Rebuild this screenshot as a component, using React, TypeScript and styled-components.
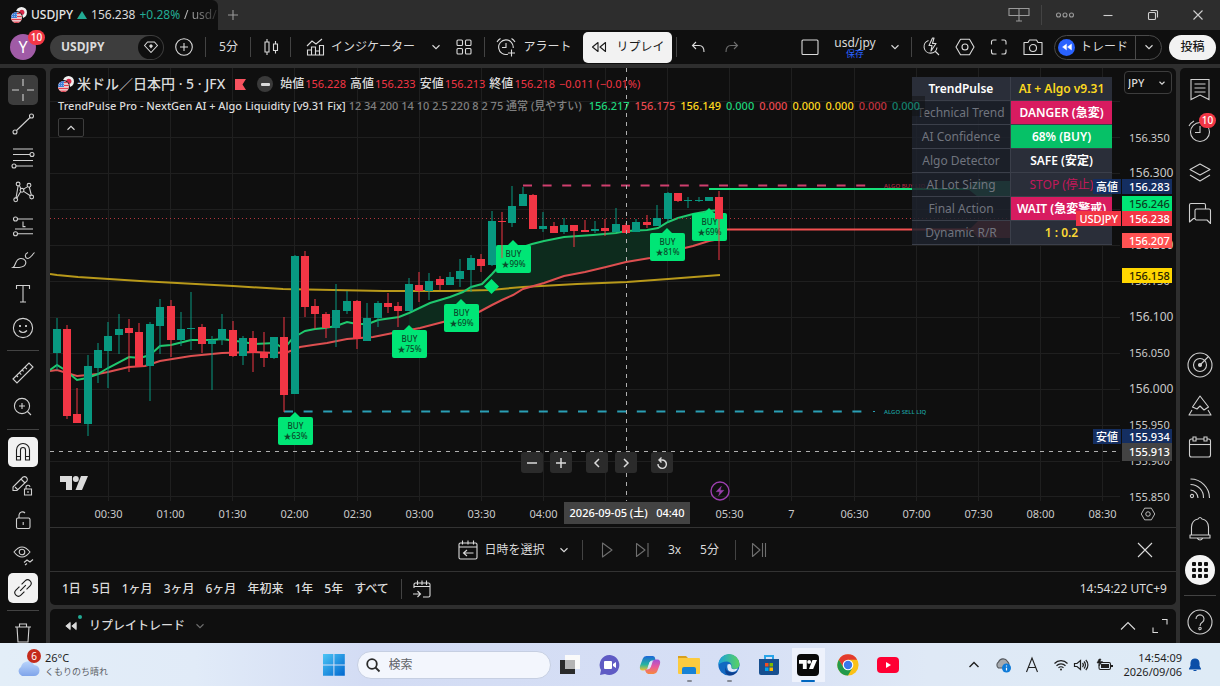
import React from "react";
import styled, { createGlobalStyle } from "styled-components";

const GlobalStyle = createGlobalStyle`
  *, *::before, *::after { box-sizing: border-box; }
  body {
    margin: 0;
    background: #2e2e2e;
    color: #dbdbdb;
    font-family: "Noto Sans", "Noto Sans CJK JP", sans-serif;
    font-size: 12px;
    line-height: 16px;
  }
  button, input, select { font: inherit; color: inherit; }
  button { background: none; border: 0; padding: 0; cursor: pointer; }
  svg { display: block; flex: none; }
`;

const UP = "#089981";
const DOWN = "#f23645";
const PANEL = "#0f0f0f";

/* ---------- icons: drawn round the origin, one unit to the pixel ---------- */

type IconProps = { size?: number; color?: string; width?: number; children: React.ReactNode };

const Icon = ({ size = 28, color = "currentColor", width = 1.1, children }: IconProps) => (
  <svg
    width={size}
    height={size}
    viewBox={`${-size / 2} ${-size / 2} ${size} ${size}`}
    fill="none"
    stroke={color}
    strokeWidth={width}
    aria-hidden="true"
  >
    {children}
  </svg>
);

const Chevron = ({ up = false, w = 3.5 }: { up?: boolean; w?: number }) => (
  <Icon size={18}>
    <path d={up ? `M${-w} ${w / 2}L0 ${-w / 2}L${w} ${w / 2}` : `M${-w} ${-w / 2}L0 ${w / 2}L${w} ${-w / 2}`} />
  </Icon>
);

const FlagPair = () => (
  <svg width="16" height="16" viewBox="0 0 16 16" aria-hidden="true">
    <circle cx="10.5" cy="5.5" r="5.5" fill="#f0f0f0" />
    <circle cx="10.8" cy="5.3" r="2.6" fill="#d6294a" />
    <circle cx="5.5" cy="10.5" r="6.4" fill={PANEL} />
    <clipPath id="us"><circle cx="5.5" cy="10.5" r="5.5" /></clipPath>
    <g clipPath="url(#us)">
      <rect y="5" width="11" height="11" fill="#f0f0f0" />
      <path d="M0 6.5H11M0 9.5H11M0 12.5H11M0 15.3H11" stroke="#e0404f" strokeWidth="1.4" />
      <rect y="5" width="6" height="6" fill="#3f7fd6" />
      <path d="M1 7.5H6M1 9.5H6" stroke="#cfe0f5" strokeWidth=".6" strokeDasharray="1 1" />
    </g>
  </svg>
);

const TvMark = ({ w, color }: { w: number; color: string }) => (
  <svg width={w} height={w / 2} viewBox="0 0 28 14" fill={color} aria-hidden="true">
    <path d="M0 0H12V14H6V6H0Z" />
    <circle cx="15.8" cy="3" r="3" />
    <path d="M21 0H28L22 14H15.5Z" />
  </svg>
);

const Rewind = ({ fill = "none", size = 18, s = 1 }: { fill?: string; size?: number; s?: number }) => (
  <Icon size={size}>
    <path d="M-1 -4.5V4.5L-6.5 0ZM6.5 -4.5V4.5L1 0Z" transform={`scale(${s})`} fill={fill} strokeLinejoin="round" />
  </Icon>
);

const HexNut = ({ s = 1, size = 28 }: { s?: number; size?: number }) => (
  <Icon size={size}>
    <g transform={`scale(${s})`}>
      <path d="M-4.5 -7.8H4.5L9 0L4.5 7.8H-4.5L-9 0Z" strokeLinejoin="round" />
      <circle r="3" />
    </g>
  </Icon>
);

const Alarm = ({ plus = false }: { plus?: boolean }) =>
  plus ? (
    <Icon size={22}>
      <path d="M2 7.2A7.3 7.3 0 1 1 7.2 1M0 -4V0.5H-4M-9 -5A9 9 0 0 1 -5.5 -8.5M5.5 -8.5A9 9 0 0 1 9 -5M5.5 2.5V9.5M2 6H9" />
    </Icon>
  ) : (
    <Icon>
      <circle cx="0" cy="1" r="9.5" />
      <path d="M0 -5V1.5H-5M-11 -5A13 13 0 0 1 -6 -10" />
    </Icon>
  );

const drawingTools: { name: string; active?: "dim" | "lit"; icon: React.ReactNode; rule?: boolean }[] = [
  { name: "十字線", active: "dim", icon: <path d="M0 -11V-4M0 4V11M-11 0H-4M4 0H11" /> },
  { name: "トレンドライン", icon: <><circle cx="8.5" cy="-8" r="2" /><circle cx="-8" cy="8" r="2" /><path d="M7 -6.5L-6.5 6.5" /></> },
  { name: "フィボナッチ", icon: <><path d="M-10 -9H10M-10 -3.5H7M-10 2.5H10M-7 8H10" /><circle cx="9" cy="-3.5" r="2" /><circle cx="-9" cy="8" r="2" /></> },
  { name: "パターン", icon: <><path d="M-4.9 -6L-7 6M-3.6 -6.6L-2 -3M4.7 -5.4L.5 -2.9M6.3 -4.8L8.3 3M.7 -.6L7.3 3.8M-2.4 -.3L-6.2 6.2" /><circle cx="-4.9" cy="-8" r="1.9" /><circle cx="6" cy="-6.7" r="1.9" /><circle cx="-1" cy="-1.7" r="1.9" /><circle cx="8.7" cy="5" r="1.9" /><circle cx="-7.3" cy="7.8" r="1.9" /></> },
  { name: "予測", icon: <><path d="M-5.5 -7H10M0 -4.5V.6H2.5M-8 3H10M-5.5 7.8H10" /><circle cx="-7.5" cy="-7" r="2" /><circle cx="-7.5" cy="7.8" r="2" /></> },
  { name: "ブラシ", icon: <path d="M-10 7.5C-7 6 -8 -1 -2.5 -1.5C2 -1.8 4 2 2 5C.2 7.8 -4 7.8 -10 7.5ZM5 -7.5C1 -6 2 -1.5 5 -1.5C7 -1.5 7.5 -3 11.5 -7.5" /> },
  { name: "テキスト", icon: <path d="M-6.5 -5V-8.5H6.5V-5M0 -8.5V8M-3 8H3" /> },
  { name: "アイコン", rule: true, icon: <><circle r="9.6" /><path d="M-4 2.5Q0 6.5 4 2.5" /><path d="M-3 -3V-1M3 -3V-1" strokeWidth="1.8" /></> },
  { name: "計測", icon: <path d="M-10 6L6 -10L10 -6L-6 10ZM-6.5 2.5L-5 4M-3.7 -.3L-1.7 1.7M-.9 -3.1L.6 -1.6M1.9 -5.9L3.9 -3.9" /> },
  { name: "ズームイン", rule: true, icon: <><circle cx="-1" cy="-1" r="7.6" /><path d="M4.5 4.5L8 8M-1 -4V2M-4 -1H2" /></> },
  { name: "マグネット", active: "lit", icon: <path d="M-6.5 8V-2A6.5 6.5 0 0 1 6.5 -2V8H2.5V-2A2.5 2.5 0 0 0 -2.5 -2V8ZM-6.5 4.5H-2.5M2.5 4.5H6.5" /> },
  { name: "描画モード維持", icon: <><path d="M-10 4V1L0 -9Q2 -10 3.5 -8.5Q5 -7 4 -5L-6 4.5L-10 4.5ZM-2 -7L2 -3M-8 1L-5.5 3.5" /><path d="M1.5 3H8.5V9H1.5ZM3 3V1.5A2 2 0 0 1 7 1M5 5V7" /></> },
  { name: "描画をロック", icon: <><rect x="-6.5" y="-2" width="13.5" height="10.5" rx="1.5" /><path d="M-4 -2V-5A3.5 3.5 0 0 1 2 -7M.2 2V5" /></> },
  { name: "描画を隠す", icon: <><path d="M-9 -2Q-1 -12 7 -2Q-1 8 -9 -2Z" /><circle cx="-1" cy="-2" r="2.8" /><path d="M1 8.5L4 6L7 8L10 5.5M2 11L4 9.500" /></> },
  { name: "リンク", active: "lit", rule: true, icon: <g transform="rotate(-45)"><path d="M-1.5 3.5H-6.5A3.5 3.5 0 0 1 -6.5 -3.5H-1.5M1.5 -3.5H6.5A3.5 3.5 0 0 1 6.5 3.5H1.5M-4 0H4" /></g> },
  { name: "削除", icon: <path d="M-8 -6H8M-6 -6L-5 9H5L6 -6M-3.5 -6V-9H3.5V-6" /> },
];

/* ---------- window frame ---------- */

const Page = styled.div`
  display: flex;
  flex-direction: column;
  height: 100vh;
  overflow: hidden;
`;

const TabStrip = styled.div`
  display: flex;
  flex: none;
  align-items: center;
  height: 30px;
  background: #2d2d2d;
`;

const Tab = styled.div`
  display: flex;
  align-items: center;
  gap: 4px;
  width: 218px;
  height: 100%;
  padding: 0 10px 0 11px;
  border-radius: 0 6px 0 0;
  background: ${PANEL};
  white-space: nowrap;
  overflow: hidden;
  font-size: 12px;
`;

const TabTitle = styled.span`
  font-weight: 500;
  color: #e6e6e6;
`;

const Change = styled.span`
  color: #22ab94;
`;

const Fade = styled.span`
  color: transparent;
  background: linear-gradient(90deg, #ccc, #333 32px);
  background-clip: text;
`;

const Spacer = styled.div`
  flex: 1;
`;

const WindowButton = styled.button<{ $w: number; $dim?: boolean }>`
  display: flex;
  justify-content: center;
  align-items: center;
  width: ${(p) => p.$w}px;
  height: 30px;
  color: ${(p) => (p.$dim ? "#9a9a9a" : "#cfcfcf")};
`;

const Header = styled.header`
  display: flex;
  flex: none;
  align-items: center;
  height: 34px;
  padding: 0 4px 0 10px;
  background: ${PANEL};
`;

const Slot = styled.button<{ $w: number; $dim?: boolean }>`
  display: flex;
  flex: none;
  justify-content: center;
  align-items: center;
  gap: 6px;
  width: ${(p) => p.$w}px;
  height: 30px;
  color: ${(p) => (p.$dim ? "#6e6e6e" : "#dbdbdb")};
  white-space: nowrap;
`;

const Sep = styled.div<{ $m?: number; $ml?: number }>`
  flex: none;
  width: 1px;
  height: 20px;
  margin: 0 ${(p) => p.$m ?? 2}px 0 ${(p) => p.$ml ?? 1}px;
  background: #434343;
`;

const Avatar = styled.button`
  position: relative;
  width: 26px;
  height: 26px;
  margin-right: 14px;
  border-radius: 50%;
  background: #a05ba6;
  color: #fff;
  font-size: 16px;
`;

const Badge = styled.span`
  position: absolute;
  top: -4px;
  right: -9px;
  min-width: 17px;
  padding: 0 2px;
  border-radius: 8px;
  background: ${DOWN};
  color: #fff;
  font-size: 10px;
  font-weight: 500;
  line-height: 15px;
  text-align: center;
`;

const SymbolPill = styled.button`
  display: flex;
  justify-content: space-between;
  align-items: center;
  width: 114px;
  height: 25px;
  padding: 0 1px 0 11px;
  border-radius: 13px;
  background: #3d3d3d;
  font-size: 12px;
  font-weight: 700;
`;

const PillEye = styled.span`
  display: flex;
  justify-content: center;
  align-items: center;
  width: 25px;
  height: 23px;
  border-radius: 12px;
  background: ${PANEL};
`;

const ReplayButton = styled.button`
  display: flex;
  justify-content: center;
  align-items: center;
  gap: 8px;
  width: 89px;
  height: 31px;
  margin: 0 3px;
  border-radius: 5px;
  background: #f2f2f2;
  color: #1a1a1a;
`;

const LayoutName = styled.span`
  display: block;
  font-size: 12px;
  line-height: 12px;
  small {
    display: block;
    color: #2962ff;
    font-size: 9px;
    line-height: 9px;
  }
`;

const TradePill = styled.div`
  display: flex;
  align-items: center;
  width: 108px;
  height: 25px;
  margin: 0 7px 0 4px;
  border: 1px solid #4a4a4a;
  border-radius: 13px;
`;

const TradeMain = styled.button`
  display: flex;
  flex: 1;
  align-items: center;
  gap: 5px;
  height: 23px;
  padding-left: 3px;
  border-right: 1px solid #4a4a4a;
`;

const BlueDot = styled.span`
  display: flex;
  justify-content: center;
  align-items: center;
  width: 17px;
  height: 17px;
  border-radius: 50%;
  background: #2962ff;
  color: #fff;
`;

const TradeMore = styled.button`
  display: flex;
  justify-content: center;
  width: 25px;
`;

const Publish = styled.button`
  width: 47px;
  height: 25px;
  border-radius: 13px;
  background: #f2f2f2;
  color: #1a1a1a;
  font-size: 12px;
  font-weight: 500;
`;

/* ---------- body ---------- */

const Body = styled.div`
  display: grid;
  flex: 1;
  grid-template-columns: 46px minmax(0, 1fr) 40px;
  gap: 4px;
  min-height: 0;
  padding-top: 4px;
`;

const Rail = styled.nav<{ $right?: boolean }>`
  display: flex;
  flex-direction: column;
  align-items: center;
  padding: ${(p) => (p.$right ? "1px 0 1px" : "5px 0 0")};
  border-radius: ${(p) => (p.$right ? "5px 0 0 0" : "0 5px 0 0")};
  background: ${PANEL};
  overflow: hidden;
`;

const Tool = styled.button<{ $state?: "dim" | "lit" }>`
  display: flex;
  flex: none;
  justify-content: center;
  align-items: center;
  width: 30px;
  height: 30px;
  margin: 2px 0;
  border-radius: 5px;
  background: ${(p) => (p.$state === "lit" ? "#f2f2f2" : p.$state === "dim" ? "#3d3d3d" : "none")};
  color: ${(p) => (p.$state === "lit" ? "#1a1a1a" : "#d1d1d1")};
`;

const Rule = styled.hr`
  flex: none;
  width: 32px;
  height: 1px;
  margin: 5px 0;
  border: 0;
  background: #434343;
`;

const SideButton = styled.button`
  position: relative;
  display: flex;
  flex: none;
  justify-content: center;
  align-items: center;
  width: 40px;
  height: 41px;
  color: #cfcfcf;
`;

const SideBadge = styled(Badge)`
  top: 3px;
  right: 4px;
`;

const AppsDot = styled.span`
  display: flex;
  justify-content: center;
  align-items: center;
  width: 30px;
  height: 30px;
  border-radius: 50%;
  background: #f5f5f5;
  color: #111;
`;

const Center = styled.main`
  display: flex;
  flex-direction: column;
  min-width: 0;
  min-height: 0;
`;

const ChartPanel = styled.section`
  display: flex;
  flex: 1;
  flex-direction: column;
  min-height: 0;
  border-radius: 5px;
  background: ${PANEL};
`;

const ChartGrid = styled.div`
  display: grid;
  flex: 1;
  grid-template: minmax(0, 1fr) 26px / minmax(0, 1fr) 56px;
  min-height: 0;
`;

const Plot = styled.div`
  position: relative;
  overflow: hidden;
`;

const Layer = styled.svg`
  position: absolute;
  inset: 0;
  width: 100%;
  height: 100%;
`;

const Signal = styled.div`
  position: absolute;
  width: 35px;
  margin-left: -17px;
  padding: 4px 0;
  border-radius: 2px;
  background: #00e676;
  color: #0b4a2b;
  font-size: 8px;
  font-weight: 500;
  line-height: 10px;
  text-align: center;
  &::before {
    content: "";
    position: absolute;
    top: -5px;
    left: 12px;
    border: 5px solid transparent;
    border-top: 0;
    border-bottom-color: #00e676;
  }
  span { display: block; }
`;

const ZoneName = styled.span<{ $c: string }>`
  position: absolute;
  margin-top: -5px;
  color: ${(p) => p.$c};
  font-size: 6px;
  font-weight: 500;
  line-height: 10px;
  white-space: nowrap;
`;

const Legend = styled.div`
  position: absolute;
  z-index: 2;
  top: 6px;
  left: 8px;
  white-space: nowrap;
`;

const LegendRow = styled.div`
  display: flex;
  align-items: center;
  height: 20px;
  font-size: 11px;
  font-weight: 500;
`;

const PairName = styled.span`
  margin: 0 10px 0 3px;
  font-size: 14px;
`;

const Disc = styled.span`
  display: flex;
  justify-content: center;
  align-items: center;
  width: 16px;
  height: 16px;
  margin: 0 7px 0 11px;
  border-radius: 50%;
  background: #3a3a3a;
`;

const Ohlc = styled.span`
  margin-right: 4px;
  color: ${DOWN};
  font-weight: 400;
  b {
    margin-right: 1px;
    color: #dbdbdb;
    font-size: 12px;
    font-weight: 500;
  }
`;

const StudyRow = styled(LegendRow)`
  height: 24px;
`;

const StudyArgs = styled.span`
  margin: 0 7px 0 3px;
  color: #808080;
`;

const StudyValue = styled.span<{ $c: string }>`
  padding-right: 5px;
  color: ${(p) => p.$c};
  line-height: 20px;
  &:last-child { background: rgba(15, 15, 15, 0.45); }
`;

const Collapse = styled.button`
  display: flex;
  justify-content: center;
  align-items: center;
  width: 26px;
  height: 19px;
  border: 1px solid #3d3d3d;
  border-radius: 2px;
`;

const Dashboard = styled.table`
  position: absolute;
  top: 9px;
  right: 8px;
  width: 200px;
  border-spacing: 0;
  table-layout: fixed;
  th, td {
    height: 24px;
    padding: 0;
    border-bottom: 1px solid #3b3f4a;
    font-size: 12px;
    line-height: 16px;
    text-align: center;
    white-space: nowrap;
    overflow: hidden;
  }
  th {
    width: 99px;
    border-right: 1px solid #3b3f4a;
    background: rgba(30, 34, 45, 0.84);
    color: #70747e;
    font-weight: 400;
  }
`;

const Cell = styled.td<{ $bg: string; $c: string; $regular?: boolean }>`
  background: ${(p) => p.$bg};
  color: ${(p) => p.$c};
  font-weight: ${(p) => (p.$regular ? 400 : 600)};
`;

const HeadCell = styled.th`
  && {
    background: #2a2e39;
    color: #fff;
    font-weight: 600;
  }
`;

const MapControls = styled.div`
  position: absolute;
  right: 0;
  bottom: 28px;
  left: 23px;
  display: flex;
  justify-content: center;
  gap: 7px;
`;

const MapButton = styled.button<{ $lead?: boolean }>`
  display: flex;
  justify-content: center;
  align-items: center;
  width: 22px;
  height: 21px;
  margin-left: ${(p) => (p.$lead ? 7 : 0)}px;
  border-radius: 3px;
  background: #2b2b2b;
`;

const Watermark = styled.div`
  position: absolute;
  bottom: 11px;
  left: 10px;
`;

const Flash = styled.div`
  position: absolute;
  bottom: 0;
  margin-left: -10px;
`;

const PriceAxis = styled.div`
  position: relative;
`;

const Currency = styled.label`
  position: absolute;
  z-index: 1;
  top: 3px;
  left: 4px;
  display: flex;
  align-items: center;
  width: 48px;
  height: 23px;
  border: 1px solid #3d3d3d;
  border-radius: 4px;
  background: ${PANEL};
  select {
    width: 31px;
    padding: 0 0 0 3px;
    border: 0;
    background: none;
    appearance: none;
    font-size: 11px;
    font-weight: 500;
  }
`;

const Price = styled.span<{ $strong?: boolean }>`
  position: absolute;
  left: 9px;
  margin-top: -8px;
  color: #c9c9c9;
  font-size: ${(p) => (p.$strong ? 12 : 11)}px;
  line-height: 16px;
`;

const Tag = styled.span<{ $bg: string; $c?: string; $tall?: boolean }>`
  position: absolute;
  left: 2px;
  width: 50px;
  margin-top: ${(p) => (p.$tall ? -9 : -8)}px;
  padding-left: 7px;
  background: ${(p) => p.$bg};
  color: ${(p) => p.$c ?? "#fff"};
  font-size: 11px;
  font-weight: 500;
  line-height: ${(p) => (p.$tall ? 18 : 15)}px;
`;

const TagName = styled.span<{ $bg: string }>`
  position: absolute;
  top: 0;
  right: 100%;
  margin-right: 1px;
  padding: 0 3px;
  background: ${(p) => p.$bg};
  white-space: nowrap;
`;

const TimeAxis = styled.div`
  position: relative;
`;

const Time = styled.span`
  position: absolute;
  top: 5px;
  width: 40px;
  margin-left: -20px;
  color: #c9c9c9;
  font-size: 11px;
  text-align: center;
`;

const TimeTag = styled.span`
  position: absolute;
  top: 1px;
  width: 126px;
  margin-left: -63px;
  background: #434343;
  color: #fff;
  font-size: 11px;
  font-weight: 500;
  line-height: 22px;
  text-align: center;
  white-space: pre;
`;

const AxisSettings = styled.button`
  display: flex;
  justify-content: center;
  align-items: center;
`;

const ReplayBar = styled.div`
  display: grid;
  flex: none;
  grid-template-columns: 1fr auto 1fr;
  align-items: center;
  height: 44px;
  border-top: 1px solid #333;
`;

const ReplayTools = styled.div`
  display: flex;
  grid-column: 2;
  align-items: center;
`;

const Close = styled.button`
  justify-self: end;
  margin-right: 17px;
`;

const RangeBar = styled.div`
  display: flex;
  flex: none;
  align-items: center;
  height: 34px;
  padding: 0 9px 0 12px;
  border-top: 1px solid #333;
`;

const Range = styled.button`
  margin-right: 11px;
  font-size: 12px;
  font-weight: 500;
`;

const BottomPanel = styled.section`
  display: flex;
  flex: none;
  align-items: center;
  height: 34px;
  margin-top: 4px;
  padding: 0 0 0 12px;
  border-radius: 5px 5px 0 0;
  background: ${PANEL};
`;

const TradeTitle = styled.button`
  position: relative;
  display: flex;
  align-items: center;
  gap: 9px;
  font-size: 12px;
  font-weight: 500;
  &::after {
    content: "";
    position: absolute;
    top: -2px;
    left: 16px;
    width: 4px;
    height: 4px;
    border-radius: 50%;
    background: #22ab94;
  }
`;

/* ---------- task bar ---------- */

const TaskBar = styled.footer`
  display: grid;
  flex: none;
  grid-template-columns: 1fr auto 1fr;
  align-items: center;
  height: 43px;
  background: linear-gradient(90deg, #e3eef8 0%, #e1ebf8 16%, #d3dcf4 30%, #d6dff5 60%, #dfe9f6 76%, #deebf6 100%);
  color: #1f1f1f;
`;

const Weather = styled.button`
  position: relative;
  display: flex;
  align-items: center;
  gap: 5px;
  padding-left: 16px;
  font-size: 11px;
  line-height: 14px;
  text-align: left;
  small { display: block; color: #5b6066; font-size: 9px; }
`;

const WeatherBadge = styled.span`
  position: absolute;
  top: -2px;
  left: 27px;
  width: 14px;
  border-radius: 50%;
  background: #c42b1c;
  color: #fff;
  font-size: 10px;
  text-align: center;
`;

const TaskCenter = styled.div`
  display: flex;
  align-items: center;
  padding-left: 10px;
`;

const StartButton = styled.button`
  width: 22px;
  height: 22px;
`;

const SearchBox = styled.label`
  display: flex;
  align-items: center;
  gap: 8px;
  width: 194px;
  height: 28px;
  margin-left: 12px;
  padding-left: 7px;
  border: 1px solid #c6cfe2;
  border-radius: 14px;
  background: #f3f6fd;
  input {
    width: 140px;
    padding: 0;
    border: 0;
    outline: 0;
    background: none;
    font-size: 12px;
  }
  input::placeholder { color: #5f6368; opacity: 1; }
`;

const Apps = styled.div`
  display: flex;
  width: 357px;
`;

const AppButton = styled.button<{ $open?: boolean; $active?: boolean }>`
  position: relative;
  display: flex;
  flex: 1;
  justify-content: center;
  align-items: center;
  height: 34px;
  border-radius: 4px;
  background: ${(p) => (p.$active ? "linear-gradient(90deg, transparent 3px, #eef2fc 3px, #eef2fc 36px, transparent 36px)" : "none")};
  &::after {
    content: "";
    position: absolute;
    bottom: 0;
    width: ${(p) => (p.$active ? 14 : p.$open ? 5 : 0)}px;
    height: 2px;
    border-radius: 1px;
    background: ${(p) => (p.$active ? "#0067c0" : "#868b96")};
  }
`;

const TvTile = styled.span`
  display: flex;
  justify-content: center;
  align-items: center;
  width: 22px;
  height: 22px;
  border-radius: 4px;
  background: #0a0a0a;
`;

const Tray = styled.div`
  display: flex;
  justify-content: flex-end;
  align-items: center;
  padding-right: 12px;
`;

const TrayButton = styled.button<{ $w: number }>`
  display: flex;
  justify-content: center;
  width: ${(p) => p.$w}px;
`;

const Clock = styled.button`
  width: 60px;
  font-size: 11px;
  line-height: 14px;
  text-align: right;
`;

/* ---------- chart data ---------- */

const VIEW = { x: 50, y: 68, w: 1070, h: 433 };
const left = (x: number) => `${((x - VIEW.x) / VIEW.w) * 100}%`;
const top = (y: number) => `${((y - VIEW.y) / VIEW.h) * 100}%`;
const viewBox = `${VIEW.x} ${VIEW.y} ${VIEW.w} ${VIEW.h}`;

/* high, body top, body bottom, low, rising */
const candles: [number, number, number, number, 0 | 1][] = [
  [318, 329, 353, 370, 1], [325, 329, 416, 419, 0], [388, 414, 423, 423, 0], [355, 366, 424, 436, 1],
  [343, 350, 368, 383, 1], [322, 336, 351, 388, 1], [314, 329, 335, 354, 1], [319, 328, 333, 372, 0],
  [323, 332, 367, 367, 0], [322, 324, 366, 401, 1], [299, 307, 326, 354, 1], [300, 306, 340, 357, 0],
  [312, 329, 340, 346, 1], [292, 328, 329, 350, 1], [324, 327, 344, 353, 0], [336, 340, 344, 390, 1],
  [314, 329, 340, 345, 1], [321, 330, 356, 357, 0], [336, 338, 356, 365, 1], [331, 338, 353, 372, 0],
  [332, 352, 358, 367, 0], [337, 337, 358, 359, 1], [317, 337, 395, 412, 0], [255, 256, 394, 394, 1],
  [251, 256, 307, 317, 0], [299, 306, 314, 329, 0], [312, 314, 328, 338, 0], [284, 310, 328, 347, 1],
  [291, 301, 311, 314, 1], [300, 301, 339, 349, 0], [303, 318, 341, 341, 1], [301, 303, 318, 327, 1],
  [293, 303, 307, 313, 0], [302, 306, 311, 327, 0], [278, 284, 311, 311, 1], [272, 285, 291, 302, 0],
  [273, 281, 291, 300, 1], [276, 279, 285, 290, 0], [272, 277, 285, 285, 1], [259, 271, 279, 287, 1],
  [255, 258, 270, 292, 1], [254, 259, 266, 272, 0], [211, 221, 265, 266, 1], [212, 221, 222, 258, 0],
  [186, 206, 223, 227, 1], [187, 194, 206, 206, 1], [194, 195, 229, 229, 0], [212, 226, 229, 232, 1],
  [222, 226, 233, 233, 0], [218, 225, 232, 234, 1], [225, 225, 231, 247, 0], [220, 230, 232, 232, 0],
  [221, 229, 231, 233, 1], [219, 228, 231, 236, 0], [208, 224, 232, 232, 1], [223, 225, 233, 233, 0],
  [219, 222, 232, 232, 1], [215, 222, 225, 228, 0], [205, 218, 226, 226, 1], [192, 193, 219, 222, 1],
  [193, 193, 201, 202, 0], [197, 200, 201, 208, 1], [197, 200, 201, 202, 1], [197, 197, 201, 201, 1],
  [191, 197, 219, 260, 0],
];
const STEP = 62.13 / 6;
const candleX = (i: number) => Math.round(56.6 + i * STEP);

const fastEarly = "50,370 57,365 65,370 77,380 87,378 98,374 108,368 129,357 140,358 150,355 160,346 171,345 191,340 212,340 222,339 243,342 254,344 275,343 284,349";
const fastMid = "292,339 298,335 305,331 315,329 325,328 336,326 347,322 357,324 368,324 378,320 399,317";
const fastLate = "409,313 430,303 450,297 463,292 471,287 482,284 492,274 502,263 513,250 523,247 532,244 544,241 564,237 593,235 616,233 626,231 647,230 658,228 668,222 678,218 693,214 709,211 720,210";
const slowEarly = "50,371 57,370 77,376 98,374 108,372 129,367 145,366 160,361 191,356 222,353 254,352 275,353 288,352";
const slowMid = "300,347 313,345 327,343 347,339 373,337 393,333";
const slowLate = "420,328 443,322 479,312 492,305 502,300 513,295 523,289 544,283 564,276 585,272 606,267 626,262 650,258 668,252 693,246 709,241 720,239";
const trend = "50,274 57,275 78,277 140,281 233,286 283,289 333,290 383,291 450,291 490,290 523,287 577,284 627,282 668,279 720,275";
const reversed = (s: string) => s.split(" ").reverse().join(" ");

const signals = [
  { x: 295, y: 417, pct: 63 }, { x: 409, y: 330, pct: 75 }, { x: 461, y: 304, pct: 69 },
  { x: 513, y: 245, pct: 99 }, { x: 667, y: 233, pct: 81 }, { x: 709, y: 213, pct: 69 },
];

const gridX = Array.from({ length: 17 }, (_, i) => Math.round(108 + i * 62.13) + 0.5);
const gridY = Array.from({ length: 12 }, (_, i) => Math.round(101 + i * 35.95) + 0.5);

const times = ["00:30", "01:00", "01:30", "02:00", "02:30", "03:00", "03:30", "04:00", "", "", "05:30", "7", "06:30", "07:00", "07:30", "08:00", "08:30"];
const prices = ["156.350", "156.300", "", "156.200", "156.150", "156.100", "156.050", "156.000", "155.950", "155.900", "155.850"];

const tags = [
  { y: 187, text: "156.283", bg: "#142e61", name: "高値" },
  { y: 204, text: "156.246", bg: "#00e676", c: "#0b3d22" },
  { y: 219, text: "156.238", bg: DOWN, name: "USDJPY" },
  { y: 241, text: "156.207", bg: "#ff5252" },
  { y: 276, text: "156.158", bg: "#ffd600", c: "#2b2400" },
  { y: 437, text: "155.934", bg: "#142e61", name: "安値" },
  { y: 452, text: "155.913", bg: "#434343", tall: true },
];

const studyValues: [string, string][] = [
  ["156.217", "#1fd47c"], ["156.175", "#e8494f"], ["156.149", "#ffd820"], ["0.000", "#1fd47c"], ["0.000", "#e8494f"],
  ["0.000", "#ffd820"], ["0.000", "#ffd820"], ["0.000", "#c0333f"], ["0.000", "#15806d"],
];

const dashboard: { k: string; v: string; bg: string; c: string; regular?: boolean }[] = [
  { k: "Technical Trend", v: "DANGER (急変)", bg: "#d81b60", c: "#fff" },
  { k: "AI Confidence", v: "68% (BUY)", bg: "#06c167", c: "#fff" },
  { k: "Algo Detector", v: "SAFE (安定)", bg: "#2a2e39", c: "#fff" },
  { k: "AI Lot Sizing", v: "STOP (停止)", bg: "#2a2e39", c: "#c2185b", regular: true },
  { k: "Final Action", v: "WAIT (急変警戒)", bg: "#d81b60", c: "#fff" },
  { k: "Dynamic R/R", v: "1 : 0.2", bg: "#2a2e39", c: "#fbd835" },
];

const ChartArea = () => (
  <ChartGrid>
    <Plot>
      <Layer viewBox={viewBox} preserveAspectRatio="none" aria-hidden="true">
        <g stroke="#1f1f1f">
          {gridX.map((x) => <path key={x} d={`M${x} 68V501`} />)}
          {gridY.map((y) => <path key={y} d={`M50 ${y}H1120`} />)}
        </g>
        <polygon points={`${fastMid} 409,313 409,330 ${reversed(slowMid)}`} fill="#17191b" />
        <polygon points={`${fastLate} ${reversed(slowLate)} 409,330`} fill="#0d2b1d" />
        <polyline points={trend} fill="none" stroke="#b8991a" strokeWidth="2" />
        <polyline points={`${slowEarly} ${slowMid} ${slowLate}`} fill="none" stroke="#dd4f50" strokeWidth="2" />
        <polyline points={`${fastEarly} ${fastMid} ${fastLate}`} fill="none" stroke="#1fc86e" strokeWidth="2" />
        <path d="M523 185.5H867" stroke="#cf3f6e" strokeWidth="2" strokeDasharray="9 10.6" />
        <path d="M284 411.5H866" stroke="#2a9fb5" strokeWidth="2" strokeDasharray="9 10.6" />
        <path d="M873 411.5H875" stroke="#2a9fb5" />
        <path d="M709 189H980" stroke="#16e07a" strokeWidth="2" />
        <path d="M721 229.5H980" stroke="#f25050" strokeWidth="2" />
        <path d="M968 189L976 181H1011V197H978Z" fill="#1f8f62" />
        <path d="M970 229L978 221H1011V238H978Z" fill="#9c3236" />
        <path d="M50 218.5H1120" stroke="#b5373f" strokeDasharray="1 3" />
      </Layer>
      {signals.map((s) => (
        <Signal key={s.x} style={{ left: left(s.x), top: top(s.y) }}>
          BUY<span>★{s.pct}%</span>
        </Signal>
      ))}
      <Layer viewBox={viewBox} preserveAspectRatio="none" aria-hidden="true">
        {candles.map(([h, t, b, l, up], i) => {
          const x = candleX(i);
          const c = up ? UP : DOWN;
          return (
            <g key={i} fill={c}>
              <rect x={x - 0.5} y={h} width="1" height={l - h} />
              <rect x={x - 4} y={t} width="8" height={b - t} />
            </g>
          );
        })}
        <path d="M491.5 279L499 286.5L491.5 294L484 286.5Z" fill="#00e676" />
        <path d="M50 451.5H1120M626.5 68V501" stroke="#b0b0b0" strokeDasharray="4 5" />
      </Layer>
      <ZoneName $c="#b02a44" style={{ left: left(884), top: top(186) }}>ALGO BUY LIQ</ZoneName>
      <ZoneName $c="#1ba3a3" style={{ left: left(884), top: top(412) }}>ALGO SELL LIQ</ZoneName>
      <Dashboard>
        <tbody>
          <tr><HeadCell>TrendPulse</HeadCell><Cell $bg="#2a2e39" $c="#fbd820">AI + Algo v9.31</Cell></tr>
          {dashboard.map((r) => (
            <tr key={r.k}><th scope="row">{r.k}</th><Cell $bg={r.bg} $c={r.c} $regular={r.regular}>{r.v}</Cell></tr>
          ))}
        </tbody>
      </Dashboard>
      <Legend>
        <LegendRow>
          <FlagPair />
          <PairName>米ドル／日本円 · 5 · JFX</PairName>
          <svg width="11" height="11" viewBox="0 0 11 11" fill="#f7525f"><path d="M0 0H11L7.5 5.5L11 11H0Z" /></svg>
          <Disc><svg width="9" height="3"><rect width="9" height="3" rx="1" fill="#dbdbdb" /></svg></Disc>
          <Ohlc><b>始値</b>156.228</Ohlc>
          <Ohlc><b>高値</b>156.233</Ohlc>
          <Ohlc><b>安値</b>156.213</Ohlc>
          <Ohlc><b>終値</b>156.218</Ohlc>
          <Ohlc>−0.011 (−0.01%)</Ohlc>
        </LegendRow>
        <StudyRow>
          <span>TrendPulse Pro - NextGen AI + Algo Liquidity [v9.31 Fix]</span>
          <StudyArgs>12 34 200 14 10 2.5 220 8 2 75 通常 (見やすい)</StudyArgs>
          {studyValues.map(([v, c], i) => <StudyValue key={i} $c={c}>{v}</StudyValue>)}
        </StudyRow>
        <Collapse aria-label="折りたたむ"><Chevron up /></Collapse>
      </Legend>
      <MapControls>
        <MapButton aria-label="縮小"><Icon size={16} width={1.5}><path d="M-5 0H5" /></Icon></MapButton>
        <MapButton aria-label="拡大"><Icon size={16} width={1.5}><path d="M-5 0H5M0 -5V5" /></Icon></MapButton>
        <MapButton $lead aria-label="左へ"><Icon size={16} width={1.5}><path d="M2 -4L-2 0L2 4" /></Icon></MapButton>
        <MapButton aria-label="右へ"><Icon size={16} width={1.5}><path d="M-2 -4L2 0L-2 4" /></Icon></MapButton>
        <MapButton $lead aria-label="リセット"><Icon size={16} width={1.4}><path d="M-4 1A4.2 4.2 0 1 0 0 -3H-3M-.5 -5.5L-3 -3L-.5 -.5" /></Icon></MapButton>
      </MapControls>
      <Watermark><TvMark w={28} color="#dbdbdb" /></Watermark>
      <Flash style={{ left: left(719.5) }}>
        <Icon size={20} color="#9c3fae" width={1.4}><circle r="9" /><path d="M1.5 -5L-4 .8H-.3L-1.5 5L4 -.8H.3Z" fill="#9c3fae" strokeWidth=".3" /></Icon>
      </Flash>
    </Plot>
    <PriceAxis>
      <Currency>
        <select aria-label="通貨" defaultValue="JPY"><option>JPY</option></select>
        <Chevron w={2.5} />
      </Currency>
      {prices.map((p, i) => (
        <Price key={i} $strong={p.endsWith("00") && p !== "155.900"} style={{ top: top(137.5 + i * 35.95) }}>{p}</Price>
      ))}
      {tags.map((t) => (
        <Tag key={t.text} $bg={t.bg} $c={t.c} $tall={t.tall} style={{ top: top(t.y) }}>
          {t.name && <TagName $bg={t.bg}>{t.name}</TagName>}
          {t.text}
        </Tag>
      ))}
    </PriceAxis>
    <TimeAxis>
      {times.map((t, i) => t && <Time key={i} style={{ left: left(gridX[i]) }}>{t}</Time>)}
      <TimeTag style={{ left: left(627) }}>{"2026-09-05 (土)   04:40"}</TimeTag>
    </TimeAxis>
    <AxisSettings aria-label="軸の設定"><HexNut s={0.75} size={20} /></AxisSettings>
  </ChartGrid>
);

const App = () => (
  <Page>
    <GlobalStyle />
    <TabStrip>
      <Tab>
        <FlagPair />
        <TabTitle>USDJPY</TabTitle>
        <svg width="10" height="8"><path d="M5 0L10 8H0Z" fill="#22ab94" /></svg>
        <span>156.238</span>
        <Change>+0.28%</Change>
        <Fade>/ usd/</Fade>
      </Tab>
      <WindowButton $w={30} $dim aria-label="新しいタブ"><Icon size={14}><path d="M-5 0H5M0 -5V5" /></Icon></WindowButton>
      <Spacer />
      <WindowButton $w={43} $dim aria-label="レイアウト"><Icon size={24}><path d="M-10 -6.5H10V.5H-10ZM0 -6.5V6M-3 6H3" /></Icon></WindowButton>
      <Sep $m={3} />
      <WindowButton $w={40} $dim aria-label="メニュー"><Icon size={20}><circle cx="-6.5" r="2" /><circle r="2" /><circle cx="6.5" r="2" /></Icon></WindowButton>
      <WindowButton $w={45} aria-label="最小化"><Icon size={14}><path d="M-4.5 .5H4.5" /></Icon></WindowButton>
      <WindowButton $w={45} aria-label="元に戻す"><Icon size={14}><rect x="-4.5" y="-2.5" width="7" height="7" rx="1" /><path d="M-2.5 -4.5H3.5Q4.5 -4.5 4.5 -3.5V2.5" /></Icon></WindowButton>
      <WindowButton $w={45} aria-label="閉じる"><Icon size={14}><path d="M-4.5 -4.5L4.5 4.5M4.5 -4.5L-4.5 4.5" /></Icon></WindowButton>
    </TabStrip>

    <Header>
      <Avatar>Y<Badge>10</Badge></Avatar>
      <SymbolPill>USDJPY<PillEye><Icon size={18}><path d="M-3.5 -5H3.5L6.5 -1.5L0 5.5L-6.5 -1.5Z" strokeLinejoin="round" /><path d="M0 -3L2 -1L0 1.5L-2 -1Z" fill="currentColor" stroke="none" /></Icon></PillEye></SymbolPill>
      <Slot $w={40} aria-label="比較"><Icon size={20}><circle r="8.3" /><path d="M-4 0H4M0 -4V4" /></Icon></Slot>
      <Sep />
      <Slot $w={41}>5分</Slot>
      <Sep />
      <Slot $w={36} aria-label="ローソク足"><Icon size={20}><path d="M-6 -5H-2V5H-6ZM-4 -8V-5M-4 5V8M2.5 -3H6.5V3.5H2.5ZM4.5 -6V-3M4.5 3.5V6.5" /></Icon></Slot>
      <Sep />
      <Slot $w={134}>
        <Icon size={20}><path d="M-7.5 8V3H-3.5V8ZM-3.5 8V0H.5V8M.5 4H4.5V8M-7.5 8H8.5V-1.5H4.5V4M-8 -1L-3 -6L1 -3L7 -8" /></Icon>インジケーター
      </Slot>
      <Slot $w={18} aria-label="テンプレート"><Chevron /></Slot>
      <Slot $w={38} aria-label="お気に入り"><Icon size={18}><rect x="-7" y="-7" width="5.5" height="5.5" rx="1" /><rect x="1.5" y="-7" width="5.5" height="5.5" rx="1" /><rect x="-7" y="1.5" width="5.5" height="5.5" rx="1" /><rect x="1.5" y="1.5" width="5.5" height="5.5" rx="1" /></Icon></Slot>
      <Sep />
      <Slot $w={93}><Alarm plus />アラート</Slot>
      <ReplayButton><Rewind />リプレイ</ReplayButton>
      <Sep />
      <Slot $w={38} aria-label="元に戻す"><Icon size={18}><path d="M-2 -5L-5.5 -1.5L-2 2M-5.5 -1.5H1Q6 -1.5 6 5" /></Icon></Slot>
      <Slot $w={30} $dim aria-label="やり直す"><Icon size={18}><path d="M2 -5L5.5 -1.5L2 2M5.5 -1.5H-1Q-6 -1.5 -6 5" /></Icon></Slot>
      <Spacer />
      <Slot $w={40} aria-label="レイアウト設定"><Icon size={20}><rect x="-8" y="-7" width="16" height="14.5" rx="1" /></Icon></Slot>
      <Slot $w={50}><LayoutName>usd/jpy<small>保存</small></LayoutName></Slot>
      <Slot $w={30} aria-label="レイアウト管理"><Chevron /></Slot>
      <Sep />
      <Slot $w={34} aria-label="クイック検索"><Icon size={20}><path d="M-2.5 -6.5A6.5 6.5 0 1 0 6 .5M4.5 4.5L8 8M1.5 -9L-2 -1.5H1L0 4L5 -3.5H1.5L3 -9Z" strokeLinejoin="round" /></Icon></Slot>
      <Slot $w={34} aria-label="設定"><HexNut /></Slot>
      <Slot $w={34} aria-label="全画面"><Icon size={20}><path d="M-7.5 -2.5V-5Q-7.5 -7 -5.5 -7H-2.5M2.5 -7H5Q7 -7 7 -5V-2.5M7 2.5V5Q7 7 5 7H2.5M-2.5 7H-5.5Q-7.5 7 -7.5 5V2.5" /></Icon></Slot>
      <Slot $w={34} aria-label="スナップショット"><Icon size={20}><path d="M-9 -4.5H-5L-3.5 -7H3.5L5 -4.5H9V7.5H-9Z" strokeLinejoin="round" /><circle cy="1" r="3.5" /></Icon></Slot>
      <TradePill>
        <TradeMain><BlueDot><Icon size={14}><path d="M-.5 -3V3L-4.5 0ZM4.5 -3V3L.5 0Z" fill="#fff" strokeWidth=".4" /></Icon></BlueDot>トレード</TradeMain>
        <TradeMore aria-label="その他"><Chevron /></TradeMore>
      </TradePill>
      <Publish>投稿</Publish>
    </Header>

    <Body>
      <Rail>
        {drawingTools.map((t) => (
          <React.Fragment key={t.name}>
            <Tool $state={t.active} aria-label={t.name}><Icon>{t.icon}</Icon></Tool>
            {t.rule && <Rule />}
          </React.Fragment>
        ))}
      </Rail>

      <Center>
        <ChartPanel>
          <ChartArea />
          <ReplayBar>
            <ReplayTools>
              <Slot $w={90}>
                <Icon size={20}><rect x="-9" y="-7" width="18" height="16" rx="1.5" /><path d="M-9 -3H9M-5.5 -9.5V-5.5M0 -9.5V-5.5M5.5 -9.5V-5.5M5.5 3H-4M-1 0L-4.5 3L-1 6" /></Icon>日時を選択
              </Slot>
              <Slot $w={34} aria-label="開始点"><Chevron /></Slot>
              <Sep $m={4} />
              <Slot $w={40} $dim aria-label="再生"><Icon size={20}><path d="M-4.5 -7V7L5 0Z" strokeLinejoin="round" /></Icon></Slot>
              <Slot $w={30} $dim aria-label="進む"><Icon size={20}><path d="M-5.5 -6.5V6.5L3 0ZM6 -7V7" strokeLinejoin="round" /></Icon></Slot>
              <Slot $w={36}>3x</Slot>
              <Slot $w={34}>5分</Slot>
              <Sep $ml={8} $m={12} />
              <Slot $w={22} $dim aria-label="リアルタイムへ"><Icon size={20}><path d="M-6.5 -6.5V6.5L1 0ZM3.5 -7V7M6.5 -7V7" strokeLinejoin="round" /></Icon></Slot>
            </ReplayTools>
            <Close aria-label="リプレイを閉じる"><Icon><path d="M-7 -7L7 7M7 -7L-7 7" /></Icon></Close>
          </ReplayBar>
          <RangeBar>
            {["1日", "5日", "1ヶ月", "3ヶ月", "6ヶ月", "年初来", "1年", "5年", "すべて"].map((r) => <Range key={r}>{r}</Range>)}
            <Sep $m={8} />
            <Slot $w={24} aria-label="日付へ移動"><Icon size={20}><path d="M-8 -1V-4.5Q-8 -6 -6.5 -6H6.5Q8 -6 8 -4.5V6.5Q8 8 6.5 8H1M-8 -2.5H8M-4.5 -8.5V-4M0 -8.5V-4M4.5 -8.5V-4M-9 5H-1.5M-4.5 2L-1.5 5L-4.5 8" /></Icon></Slot>
            <Spacer />
            <span>14:54:22 UTC+9</span>
          </RangeBar>
        </ChartPanel>
        <BottomPanel>
          <TradeTitle><Rewind fill="currentColor" s={0.8} />リプレイトレード</TradeTitle>
          <Slot $w={30} $dim aria-label="切替"><Chevron /></Slot>
          <Spacer />
          <Slot $w={32} aria-label="開く"><Chevron up w={7} /></Slot>
          <Slot $w={32} aria-label="最大化"><Icon size={18}><path d="M2 -6.5H7V-1.5M-7 1.5V6.5H-2" /></Icon></Slot>
        </BottomPanel>
      </Center>

      <Rail $right>
        <SideButton aria-label="ウォッチリスト"><Icon><path d="M-9 -10.5H9V9.5L0 5L-9 9.5ZM-5.5 -6H5.5M-5.5 -2H5.5M-5.5 2H5.5" /></Icon></SideButton>
        <SideButton aria-label="アラート"><Alarm /><SideBadge>10</SideBadge></SideButton>
        <SideButton aria-label="オブジェクトツリー"><Icon><path d="M0 -8L10 -2.5L0 3L-10 -2.5ZM-10 3L0 9L10 3" strokeLinejoin="round" /></Icon></SideButton>
        <SideButton aria-label="チャット"><Icon><path d="M-5 5.5H-6.5L-10.5 9V-8Q-10.5 -9.5 -9 -9.5H4Q5.5 -9.5 5.5 -8V-4M-3.5 -4H9Q10.5 -4 10.5 -2.5V10.5L7 7H-3.5Q-5 7 -5 5.5V-2.5Q-5 -4 -3.5 -4" strokeLinejoin="round" /></Icon></SideButton>
        <Spacer />
        <SideButton aria-label="スクリーナー"><Icon><circle r="12" /><circle r="6.5" /><circle r="1.5" fill="currentColor" /><path d="M1 -1L8.5 -8.5" /></Icon></SideButton>
        <SideButton aria-label="Pine"><Icon><path d="M-7.5 1L0 -10L8.5 1L4 4L0 0L-3 3ZM-8 4L-11 9H11L8 4" strokeLinejoin="round" /></Icon></SideButton>
        <SideButton aria-label="カレンダー"><Icon><rect x="-10.5" y="-8" width="21" height="18" rx="2" /><path d="M-10.5 -2.5H10.5" /><path d="M-7 -10H-4V-6H-7ZM4 -10H7V-6H4Z" fill={PANEL} /></Icon></SideButton>
        <SideButton aria-label="ニュース"><Icon><circle cx="-8" cy="8" r="1.6" /><path d="M-9.5 2A8 8 0 0 1 -2 10M-9.5 -3.5A13 13 0 0 1 3.5 10M-9.5 -9A19 19 0 0 1 9.5 10" /></Icon></SideButton>
        <SideButton aria-label="通知"><Icon><path d="M-8.5 6V-2Q-8 -9 -2 -10Q0 -13 2 -10Q8 -9 8.5 -2V6M-10 6H10V9H-10ZM-3 9Q0 13 3 9" strokeLinejoin="round" /></Icon></SideButton>
        <SideButton aria-label="プロダクト"><AppsDot><Icon size={20}><g fill="currentColor" stroke="none">{[-8, -2, 4].map((x) => [-8, -2, 4].map((y) => <rect key={`${x},${y}`} x={x} y={y} width="4" height="4" rx="1" />))}</g></Icon></AppsDot></SideButton>
        <Rule />
        <SideButton aria-label="ヘルプ"><Icon><circle r="12" /><path d="M-4 -3A4 4 0 1 1 2.5 0Q0 1.5 0 4" /><circle cy="6.5" r="1.2" /></Icon></SideButton>
      </Rail>
    </Body>

    <TaskBar>
      <Weather>
        <svg width="24" height="28" viewBox="0 0 24 28"><defs><linearGradient id="cl" x2="0" y2="1"><stop stopColor="#b9d4fb" /><stop offset="1" stopColor="#7fa4ea" /></linearGradient></defs><path d="M6 25A5 5 0 0 1 5 16A7 7 0 0 1 18 14A5.5 5.5 0 0 1 18 25Z" fill="url(#cl)" /></svg>
        <WeatherBadge>6</WeatherBadge>
        <span>26°C<small>くもりのち晴れ</small></span>
      </Weather>
      <TaskCenter>
        <StartButton aria-label="スタート">
          <svg width="22" height="22" viewBox="0 0 22 22"><defs><linearGradient id="win" x2="1" y2="1"><stop stopColor="#4cc5f5" /><stop offset="1" stopColor="#0067cf" /></linearGradient></defs><path d="M0 0H10.4V10.4H0ZM11.4 0H21.8V10.4H11.4ZM0 11.4H10.4V21.8H0ZM11.4 11.4H21.8V21.8H11.4Z" fill="url(#win)" /></svg>
        </StartButton>
        <SearchBox>
          <Icon size={16} width={1.8} color="#2b2b2b"><circle cx="-1" cy="-1" r="4.8" /><path d="M2.5 2.5L6.5 6.5" /></Icon>
          <input type="search" placeholder="検索" aria-label="検索" />
        </SearchBox>
        <Apps>
          <AppButton aria-label="タスクビュー"><svg width="22" height="22"><rect x="6" y="1" width="15" height="14" fill="#fafafa" /><rect x="1" y="6" width="15" height="14" fill="#2b2b2b" /><rect x="6" y="6" width="10" height="9" fill="#b5b5b5" /></svg></AppButton>
          <AppButton aria-label="チャット"><svg width="22" height="22"><path d="M11 1A10 10 0 1 1 6 20L1 21L2 16A10 10 0 0 1 11 1Z" fill="#5f5bc4" /><rect x="5" y="7" width="8" height="8" rx="1" fill="#fff" /><path d="M14 10L17 8V14L14 12Z" fill="#fff" /></svg></AppButton>
          <AppButton aria-label="Copilot"><svg width="22" height="20" viewBox="0 0 24 22"><defs><linearGradient id="c1" x2="0" y2="1"><stop stopColor="#1b66d9" /><stop offset=".6" stopColor="#27b5a0" /><stop offset="1" stopColor="#f2c230" /></linearGradient><linearGradient id="c2" x2="0" y2="1"><stop stopColor="#a24fd6" /><stop offset=".5" stopColor="#e85a9b" /><stop offset="1" stopColor="#f78a3a" /></linearGradient></defs><path d="M8 1H15Q17 1 17.5 3L18 6H14Q12 6 11 9L9 15Q8 17 5 17H4Q0 17 1 12L4 4Q5 1 8 1Z" fill="url(#c1)" /><path d="M16 21H10Q8 21 7 18L6.5 16H9Q12 16 13 13L15 7Q16 5 18 5H20Q24 5 23 10L20 18Q19 21 16 21Z" fill="url(#c2)" /><path d="M11.5 8H14L12.5 13.5H10Z" fill="#dfe6f7" /></svg></AppButton>
          <AppButton $open aria-label="エクスプローラー"><svg width="22" height="22"><path d="M0 2H8L10 4V8H0Z" fill="#d9a01d" /><rect y="4" width="22" height="16" rx="1" fill="#fccb3f" /><path d="M4 20V15Q4 13 6 13H16Q18 13 18 15V20Z" fill="#1782d6" /></svg></AppButton>
          <AppButton $open aria-label="Edge"><svg width="22" height="22" viewBox="0 0 22 22"><defs><linearGradient id="ed" x2="1"><stop stopColor="#1aa0dd" /><stop offset="1" stopColor="#5ad35f" /></linearGradient></defs><circle cx="11" cy="11" r="10.6" fill="#1269c2" /><path d="M.5 11A10.5 10.5 0 0 1 21.5 10Q21.5 15 16 15Q13 15 13.5 13Q14 8 9 7.5Q3 7.5 .5 11Z" fill="url(#ed)" /><path d="M8 11Q6 18 14 18.5Q18 18.5 20 16.5Q17 21.5 12 21.5Q5 21 8 11Z" fill="#0d3f8f" /><path d="M9.5 10.5Q13 8.5 13.4 13Q13 15 16 15.3L20 14.5Q18 18 14 18Q8 17 9.5 10.5Z" fill="#dfe8f8" /></svg></AppButton>
          <AppButton aria-label="Store"><svg width="22" height="22"><path d="M7 5V2H15V5" fill="none" stroke="#2aa4e8" strokeWidth="2" /><path d="M1 5H21V19Q21 21 19 21H3Q1 21 1 19Z" fill="#174f8f" /><rect x="7" y="9" width="3.5" height="3.5" fill="#f25022" /><rect x="11.5" y="9" width="3.5" height="3.5" fill="#7fba00" /><rect x="7" y="13.5" width="3.5" height="3.5" fill="#00a4ef" /><rect x="11.5" y="13.5" width="3.5" height="3.5" fill="#ffb900" /></svg></AppButton>
          <AppButton $active aria-label="TradingView"><TvTile><TvMark w={18} color="#fff" /></TvTile></AppButton>
          <AppButton aria-label="Chrome"><svg width="22" height="22" viewBox="-11 -11 22 22"><circle r="10.6" fill="#fbc116" /><path d="M-9.2 -5.3A10.6 10.6 0 0 1 9.2 -5.3H0L-4.6 2.6Z" fill="#e33b2e" /><path d="M-9.2 -5.3L-4.5 2.6L4.6 2.6L0 10.6A10.6 10.6 0 0 1 -9.2 -5.3Z" fill="#229a4b" /><circle r="5.3" fill="#fff" /><circle r="4.2" fill="#3a78ea" /></svg></AppButton>
          <AppButton aria-label="YouTube"><svg width="22" height="16"><rect width="22" height="16" rx="4" fill="#f03" /><path d="M9 5V11L14 8Z" fill="#fff" /></svg></AppButton>
        </Apps>
      </TaskCenter>
      <Tray>
        <TrayButton $w={28} aria-label="隠れているインジケーター"><Icon size={16} width={1.4}><path d="M-4.5 2L0 -2.5L4.5 2" /></Icon></TrayButton>
        <TrayButton $w={30} aria-label="OneDrive"><Icon size={18}><path d="M-4.5 3A3.6 3.6 0 0 1 -4.5 -3A5 5 0 0 1 4.5 -3.5Q6.5 -2 6 1L2 3Z" fill="#a5a9ae" stroke="#55595e" /><circle cx="3.5" cy="3" r="4.5" fill="#0f7bd8" stroke="none" /><path d="M3.5 .5V1.5M3.5 2.7V5.5" stroke="#fff" strokeWidth="1.2" /></Icon></TrayButton>
        <TrayButton $w={28} aria-label="IME"><Icon size={18}><path d="M-5.5 7L0 -7L5.5 7M-3.5 2.5H3.5" /></Icon></TrayButton>
        <TrayButton $w={29} aria-label="Wi-Fi"><Icon size={16} width={1.2}><path d="M-6.5 -1.5A9 9 0 0 1 6.5 -1.5M-4.5 .7A6.5 6.5 0 0 1 4.5 .7M-2.5 2.8A3.5 3.5 0 0 1 2.5 2.8" /><circle cy="4.5" r="1" fill="currentColor" stroke="none" /></Icon></TrayButton>
        <TrayButton $w={12} aria-label="音量"><Icon size={16} width={1.2}><path d="M-6.5 -1.5H-4L-.5 -4.5V4.5L-4 1.5H-6.5ZM1.5 -2A3 3 0 0 1 1.5 2M3 -3.5A5 5 0 0 1 3 3.5M4.8 -5A7 7 0 0 1 4.8 5" /></Icon></TrayButton>
        <TrayButton $w={35} aria-label="電源"><Icon size={18}><rect x="-6" y="-2.5" width="11.5" height="7" rx="1.5" /><rect x="-4" y="-1" width="8" height="4" fill="currentColor" stroke="none" /><path d="M7 0V2" strokeWidth="2" /><path d="M-6 -6L-8 -2H-5L-6 1L-2.5 -3.5H-5L-4 -6Z" fill="currentColor" strokeWidth=".5" /></Icon></TrayButton>
        <Clock>14:54:09<br />2026/09/06</Clock>
        <TrayButton $w={26} aria-label="通知センター"><Icon size={16}><path d="M-5.5 4L-4 1V-2A4 4 0 0 1 4 -2V1L5.5 4ZM-1.5 5.5H1.5" fill="#0a4ea8" stroke="#0a4ea8" strokeLinejoin="round" /></Icon></TrayButton>
      </Tray>
    </TaskBar>
  </Page>
);

export default App;
